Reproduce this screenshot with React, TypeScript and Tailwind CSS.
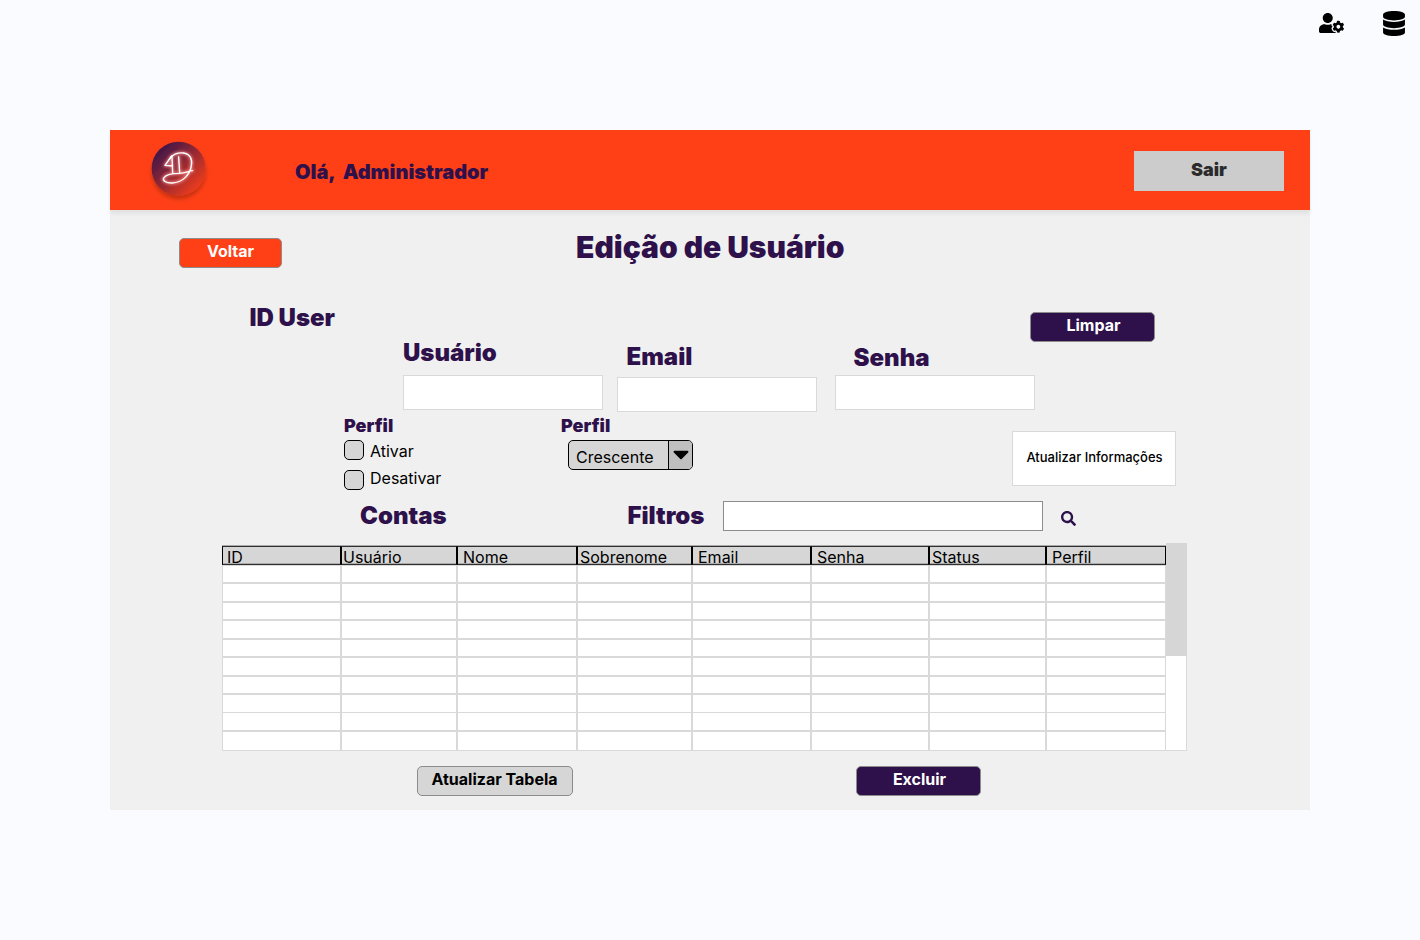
import type { ReactNode } from "react";
import { FaCaretDown, FaDatabase, FaSearch, FaUserCog } from "react-icons/fa";

const columns = [
  { label: "ID", width: "w-[119px]", pad: "pl-[4px]" },
  { label: "Usuário", width: "w-[116px]", pad: "pl-[1px]" },
  { label: "Nome", width: "w-[120px]", pad: "pl-[5px]" },
  { label: "Sobrenome", width: "w-[115px]", pad: "pl-[2px]" },
  { label: "Email", width: "w-[119px]", pad: "pl-[5px]" },
  { label: "Senha", width: "w-[118px]", pad: "pl-[5px]" },
  { label: "Status", width: "w-[117px]", pad: "pl-[2px]" },
  { label: "Perfil", width: "w-[120px]", pad: "pl-[5px]" },
];

const rows = [
  "h-[18px] border-y",
  "h-[19px] border-y",
  "h-[18px] border-y",
  "h-[19px] border-y",
  "h-[18px] border-y",
  "h-[19px] border-y",
  "h-[18px] border-y",
  "h-[18px] border-t",
  "h-[19px] border-y",
  "h-[20px] border-y",
];

function Logo() {
  return (
    <svg viewBox="0 0 240 240" className="h-20 w-20">
      <defs>
        <linearGradient id="disc" x1="0.12" y1="0.12" x2="0.88" y2="0.88">
          <stop offset="0" stopColor="#3c1549" />
          <stop offset="1" stopColor="#f03d1c" />
        </linearGradient>
        <filter id="shade" x="-30%" y="-30%" width="160%" height="160%">
          <feDropShadow dx="0" dy="10" stdDeviation="6" floodColor="#000" floodOpacity="0.25" />
        </filter>
        <filter id="glow" x="-30%" y="-30%" width="160%" height="160%">
          <feGaussianBlur stdDeviation="5" />
        </filter>
        <g id="mark" fill="none" strokeLinecap="round" strokeLinejoin="round">
          <path d="M95 78L75 106L98 108M96 79L98 129M116 81L119 130" />
          <path d="M88 88C95 74 113 67 130 69C151 72 158 88 154 108C149 136 126 158 97 159C77 160 67 151 71 144C77 134 96 130 119 130C136 129 146 123 158 122" />
        </g>
      </defs>
      <circle cx="116" cy="116" r="81" fill="url(#disc)" filter="url(#shade)" />
      <use href="#mark" stroke="#ff9a9a" strokeWidth="9" opacity="0.75" filter="url(#glow)" />
      <use href="#mark" stroke="#fff" strokeWidth="4" />
    </svg>
  );
}

function Heading({ className = "", children }: { className?: string; children: ReactNode }) {
  return (
    <h2 className={`shrink-0 whitespace-nowrap text-2xl font-black text-[#2e114b] ${className}`}>{children}</h2>
  );
}

function Button({ className = "", children }: { className?: string; children: ReactNode }) {
  return (
    <button
      className={`flex h-[30px] shrink-0 justify-center whitespace-nowrap rounded-[5px] border border-[#8c8c8c] text-base leading-[24px] font-bold ${className}`}
    >
      {children}
    </button>
  );
}

function Field({ label, className, labelClass }: { label: string; className: string; labelClass: string }) {
  return (
    <label className={`flex w-[200px] shrink-0 flex-col ${className}`}>
      <Heading className={labelClass}>{label}</Heading>
      <input className="h-[35px] w-full border border-[#d9d9d9] bg-white" />
    </label>
  );
}

function Check({ label, textClass }: { label: string; textClass: string }) {
  return (
    <label className="flex h-5 items-start">
      <span className="h-5 w-5 rounded-[5px] border border-black bg-[#d6d6d6]" />
      <span className={`text-base leading-5 ${textClass}`}>{label}</span>
    </label>
  );
}

export default function App() {
  return (
    <div className="h-[940px] w-[1420px] overflow-hidden bg-[#fafbfe] font-['Inter',sans-serif] text-black">
      <nav className="flex h-[130px] items-start justify-end pr-[15px]">
        <FaUserCog className="mt-[13px] h-5 w-[25px]" />
        <FaDatabase className="mt-[11px] ml-[39px] h-[25px] w-[22px]" />
      </nav>

      <main className="mx-auto flex h-[680px] w-[1200px] flex-col bg-[#f0f0f0]">
        <header className="flex h-20 shrink-0 items-start bg-[#ff4017] shadow-[0_4px_4px_rgba(0,0,0,0.06)]">
          <div className="ml-[30px]">
            <Logo />
          </div>
          <p className="mt-[28px] ml-[75px] whitespace-pre text-xl font-black text-[#2e114b]">
            {"Olá,  Administrador"}
          </p>
          <button className="mt-[21px] mr-[26px] ml-auto h-10 w-[150px] bg-[#ccc] pb-[3px] text-lg font-black text-[#2b2b2b]">
            Sair
          </button>
        </header>

        <div className="flex h-[90px] shrink-0 items-start">
          <Button className="mt-7 ml-[69px] w-[103px] bg-[#ff4017] text-white">Voltar</Button>
          <h1 className="mt-[17px] ml-[294px] whitespace-nowrap text-3xl leading-10 font-black text-[#2e114b]">
            Edição de Usuário
          </h1>
        </div>

        <div className="flex h-[42px] shrink-0 items-start justify-between pr-[155px] pl-[139.5px]">
          <Heading className="mt-[2px]">ID User</Heading>
          <Button className="mt-3 w-[125px] bg-[#2e114b] pl-[2px] text-white">Limpar</Button>
        </div>

        <div className="flex h-[70px] shrink-0 items-start pl-[293px]">
          <Field label="Usuário" className="-mt-[5px]" labelClass="mb-[6px]" />
          <Field label="Email" className="ml-[14px] -mt-[1px]" labelClass="mb-[4px] pl-[9.5px]" />
          <Field label="Senha" className="ml-[18px] mt-0" labelClass="mb-[1px] pl-[18.5px]" />
        </div>

        <div className="flex h-[83px] shrink-0 items-start pl-[234px]">
          <section className="w-[217px]">
            <h3 className="h-7 text-lg font-black text-[#2e114b]">Perfil</h3>
            <div className="flex flex-col gap-[10px]">
              <Check label="Ativar" textClass="ml-[6px] mt-[1px]" />
              <Check label="Desativar" textClass="ml-[6px] -mt-[2px]" />
            </div>
          </section>
          <section className="w-[132px]">
            <h3 className="h-7 text-lg font-black text-[#2e114b]">Perfil</h3>
            <button className="ml-[7px] flex h-[30px] w-[125px] overflow-hidden rounded-[5px] border border-black bg-[#d6d6d6]">
              <span className="w-[99px] pt-px pl-[7px] text-left text-base leading-[30px]">Crescente</span>
              <span className="flex h-full w-6 items-center justify-center border-l border-black bg-[#bfbfbf]">
                <FaCaretDown className="-mt-[2px] h-[26px] w-4" />
              </span>
            </button>
          </section>
          <button className="mt-[19px] ml-[319px] h-[55px] w-[164px] border border-[#d9d9d9] bg-white pb-[2px] pl-px text-[13px] font-medium">
            Atualizar Informações
          </button>
        </div>

        <div className="flex h-12 shrink-0 items-start pl-[250px]">
          <Heading className="mt-[5px] w-[267.5px]">Contas</Heading>
          <Heading className="mt-[5px] w-[95.5px]">Filtros</Heading>
          <input className="mt-[6px] h-[30px] w-[320px] border border-[#8c8c8c] bg-white" />
          <FaSearch className="mt-4 ml-[18px] h-[15px] w-[15px] text-[#2e114b]" />
        </div>

        <div className="flex h-[208px] shrink-0 items-start pl-[112px]">
          <div className="mt-[2px] w-[944px]">
            <div className="flex h-5 border-t border-[#a9aaa9]">
              {columns.map((c) => (
                <div
                  key={c.label}
                  className={`h-[19px] border border-x-black border-y-[#2f2f2f] bg-[#d6d6d6] text-base leading-[21px] shadow-[inset_0_-1px_0_#a9aaa9] ${c.width} ${c.pad}`}
                >
                  {c.label}
                </div>
              ))}
            </div>
            {rows.map((row, i) => (
              <div key={i} className="flex">
                {columns.map((c) => (
                  <div key={c.label} className={`border-x border-[#d9d9d9] bg-white ${row} ${c.width}`} />
                ))}
              </div>
            ))}
          </div>
          <div className="h-[208px] w-[21px] border-r border-b border-[#d9d9d9] bg-white">
            <div className="h-[113px] w-[21px] bg-[#d6d6d6]" />
          </div>
        </div>

        <div className="flex items-start pt-[15px] pl-[307px]">
          <Button className="w-[156px] bg-[#d6d6d6] pr-px text-black">Atualizar Tabela</Button>
          <Button className="ml-[283px] w-[125px] bg-[#2e114b] pl-[2px] text-white">Excluir</Button>
        </div>
      </main>
    </div>
  );
}
